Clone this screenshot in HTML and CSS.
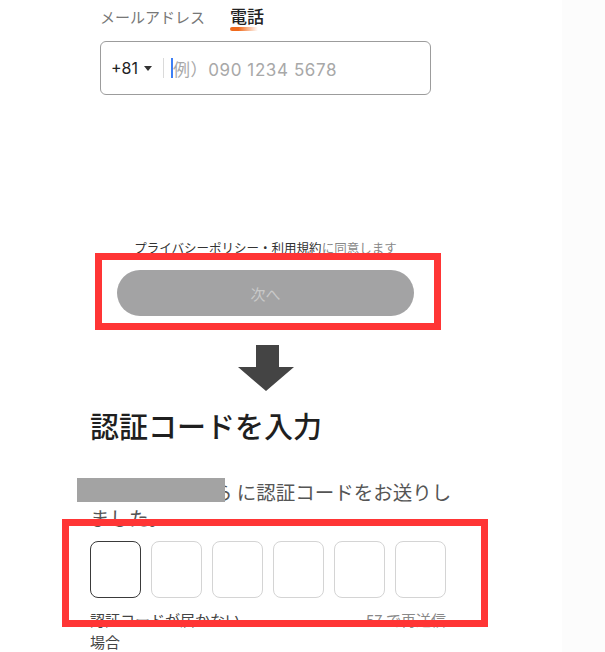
FILE: index.html
```html
<!DOCTYPE html>
<html lang="ja">
<head>
  <meta charset="UTF-8" />
  <title>電話番号でログイン</title>
  <link rel="stylesheet" href="styles.css">
</head>
<body>

  <!-- Phone number form -->
  <section class="column">
    <div class="tabs">
      <span class="tab">メールアドレス</span>
      <span class="tab active">電話</span>
    </div>

    <div class="phone-field">
      <span class="country">+81</span>
      <svg class="caret" width="8" height="5" viewBox="0 0 8 5"><path d="M0 0h8L4 5z" fill="#333"/></svg>
      <span class="divider"></span>
      <span class="cursor"></span>
      <span class="placeholder">例）090 1234 5678</span>
    </div>

    <p class="agree"><span class="link">プライバシーポリシー・利用規約</span>に同意します</p>

    <div class="submit">
      <button class="next-btn" disabled>次へ</button>
      <span class="callout callout-btn"></span>
    </div>

    <svg class="arrow" width="56" height="46" viewBox="0 0 56 46">
      <path d="M18 0h23v22h15L28 46 0 22h18z" fill="#444"/>
    </svg>
  </section>

  <!-- Verification code -->
  <section class="verify">
    <h1>認証コードを入力</h1>
    <p class="sent">
      <span class="number"></span>ら に認証コードをお送りしました。
      <span class="mask"></span>
    </p>

    <div class="code-row">
      <span class="digit focus"></span>
      <span class="digit"></span>
      <span class="digit"></span>
      <span class="digit"></span>
      <span class="digit"></span>
      <span class="digit"></span>
      <span class="callout callout-code"></span>
    </div>

    <div class="resend">
      <span class="help">認証コードが届かない場合</span>
      <span class="timer">57 で再送信</span>
    </div>
  </section>

</body>
</html>
```

FILE: styles.css
```css
body {
  margin: 0;
  height: 652px;
  overflow: hidden;
  font-family: "Noto Sans CJK JP", "Noto Sans", sans-serif;
  background: linear-gradient(to right, #ffffff 562px, #fcfcfc 562px);
  color: #222;
}

.column {
  width: 331px;
  margin-left: 100px;
  padding-top: 6px;
}

.tabs {
  display: flex;
  align-items: baseline;
  gap: 25px;
  height: 20px;
  line-height: 20px;
}

.tab {
  font-size: 15px;
  color: #777;
}

.tab.active {
  position: relative;
  font-size: 17px;
  font-weight: 500;
  color: #222;
}

.tab.active::after {
  content: "";
  position: absolute;
  left: 0;
  bottom: -5px;
  width: 28px;
  height: 4px;
  border-radius: 3px 0 0 3px;
  background: linear-gradient(90deg, #f06a1c 30%, rgba(240, 106, 28, 0));
}

.phone-field {
  display: flex;
  align-items: center;
  box-sizing: border-box;
  height: 54px;
  margin-top: 15px;
  padding: 0 10px;
  border: 1px solid #9c9c9c;
  border-radius: 6px;
  font-family: "Inter", "Noto Sans CJK JP", sans-serif;
  font-size: 16px;
}

.country {
  color: #222;
}

.caret {
  margin-left: 6px;
}

.divider {
  width: 1px;
  height: 20px;
  margin-left: 11px;
  background: #dadada;
}

.cursor {
  width: 2px;
  height: 20px;
  margin-left: 7px;
  background: #3d7ff5;
}

.placeholder {
  font-size: 17px;
  letter-spacing: 0.6px;
  color: #a8a8a8;
}

.agree {
  margin: 145px 0 0;
  font-size: 12.5px;
  line-height: 16px;
  text-align: center;
  color: #888;
}

.agree .link {
  color: #333;
}

.submit {
  position: relative;
  margin-top: 14px;
}

.next-btn {
  display: block;
  width: 297px;
  height: 46px;
  margin: 0 auto;
  border: none;
  border-radius: 23px;
  background: #a3a3a4;
  color: #c9c9c9;
  font-family: inherit;
  font-size: 15px;
}

.callout {
  position: absolute;
  border: 7px solid #ff3535;
  pointer-events: none;
}

.callout-btn {
  top: -17px;
  left: -5px;
  right: -10px;
  bottom: -14px;
}

.arrow {
  display: block;
  margin: 29px auto 0;
}

.verify {
  width: 372px;
  margin-left: 90px;
}

h1 {
  margin: 14px 0 0;
  font-size: 29px;
  line-height: 40px;
  font-weight: 500;
  color: #1f1f1f;
}

.sent {
  position: relative;
  margin: 34px 0 0;
  font-size: 19.5px;
  line-height: 26px;
  color: #555;
}

.number {
  display: inline-block;
  width: 123px;
  height: 1px;
}

.mask {
  position: absolute;
  top: -1px;
  left: -13px;
  width: 148px;
  height: 24px;
  background: #a3a3a3;
}

.code-row {
  position: relative;
  display: flex;
  gap: 10px;
  width: 356px;
  margin-top: 10px;
}

.digit {
  box-sizing: border-box;
  width: 51px;
  height: 57px;
  border: 1px solid #d4d4d4;
  border-radius: 8px;
}

.digit.focus {
  border: 1.5px solid #3a3a3a;
}

.callout-code {
  top: -22px;
  left: -28px;
  right: -42px;
  bottom: -29px;
}

.resend {
  display: flex;
  justify-content: space-between;
  width: 356px;
  margin-top: 11px;
  font-size: 15px;
  line-height: 22px;
}

.help {
  max-width: 160px;
  color: #444;
}

.timer {
  color: #888;
}
```
